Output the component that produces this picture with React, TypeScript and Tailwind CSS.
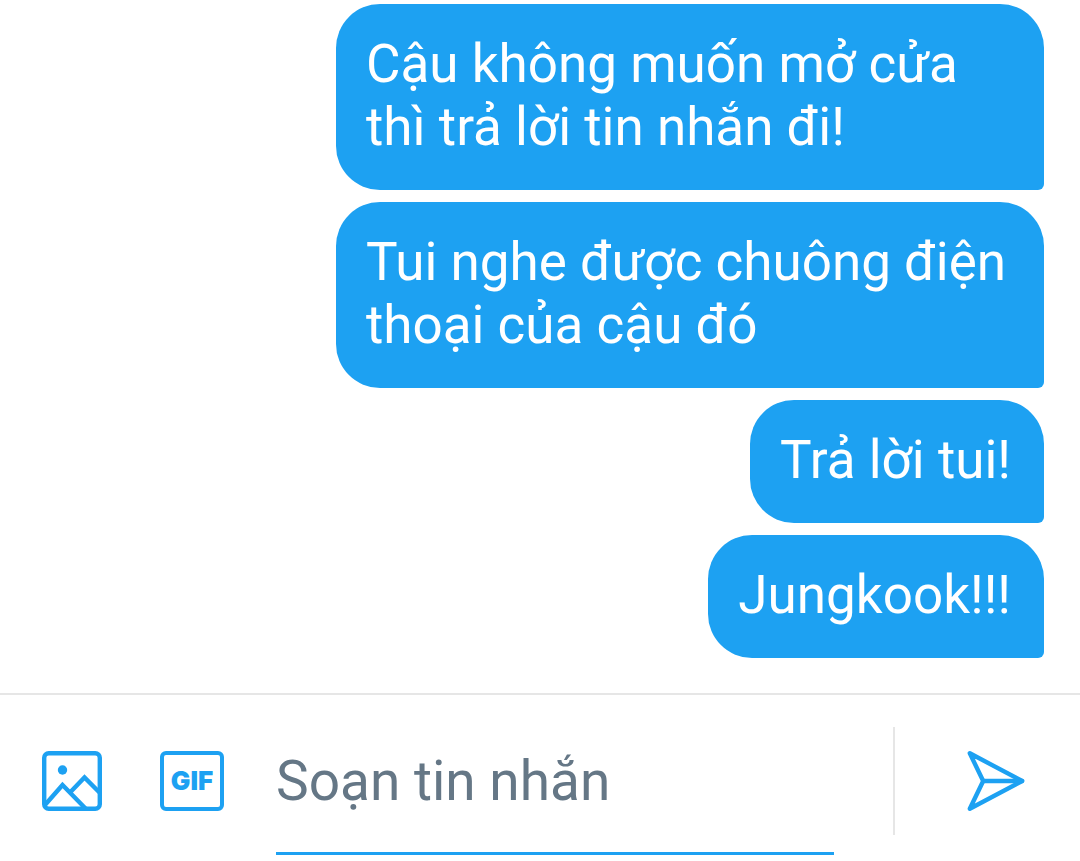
import type { ReactNode } from "react";

const messages = [
  "Cậu không muốn mở cửa thì trả lời tin nhắn đi!",
  "Tui nghe được chuông điện thoại của cậu đó",
  "Trả lời tui!",
  "Jungkook!!!",
];

function Bubble({ children }: { children: ReactNode }) {
  return (
    <li className="max-w-[708px] rounded-[44px] rounded-br-md bg-[#1da1f2] pt-[29px] pr-[33px] pb-[31px] pl-[30px] text-[53px] leading-[63px] text-white">
      {children}
    </li>
  );
}

function PhotoIcon() {
  return (
    <svg
      width="60"
      height="60"
      viewBox="0 0 60 60"
      fill="none"
      stroke="currentColor"
      strokeWidth="4.4"
      aria-hidden="true"
    >
      <rect x="2.2" y="2.2" width="55.6" height="55.6" rx="4.5" />
      <circle cx="20.5" cy="19" r="4.7" fill="currentColor" stroke="none" />
      <path d="M2.5 54.5 20.5 34 43.5 57.5" />
      <path d="M28 41.5 42.5 26.5 57.5 41.5" />
    </svg>
  );
}

function SendIcon() {
  return (
    <svg
      width="60"
      height="60"
      viewBox="0 0 60 60"
      fill="none"
      stroke="currentColor"
      strokeWidth="4.4"
      strokeLinecap="round"
      strokeLinejoin="round"
      aria-hidden="true"
    >
      <path d="M3.8 2.3 56.2 30 3.8 57.7 17.2 30Z" />
      <path d="M17.2 30H56" />
    </svg>
  );
}

export default function App() {
  return (
    <div className="flex min-h-screen flex-col bg-white font-['Roboto',sans-serif]">
      <main className="flex flex-1 flex-col justify-end px-9 pt-1 pb-[35px]">
        <ul className="flex flex-col items-end gap-3">
          {messages.map((message) => (
            <Bubble key={message}>{message}</Bubble>
          ))}
        </ul>
      </main>

      <form
        className="flex items-start border-t-2 border-[#e6e6e6] pt-8 pb-1.5 pl-[42px] text-[#1da1f2]"
        onSubmit={(e) => e.preventDefault()}
      >
        {/* Attachments */}
        <div className="mr-[52px] flex h-[108px] shrink-0 items-center gap-[58px]">
          <button type="button" aria-label="Ảnh">
            <PhotoIcon />
          </button>
          <button
            type="button"
            className="flex h-[60px] w-16 items-center justify-center rounded-md border-4 border-[#1da1f2] font-['Inter',sans-serif] text-[26px] leading-none font-black"
          >
            GIF
          </button>
        </div>

        <input
          type="text"
          aria-label="Soạn tin nhắn"
          placeholder="Soạn tin nhắn"
          className="h-32 min-w-0 flex-1 border-b-[3px] border-[#1da1f2] pb-[18px] text-[55px] text-[#14171a] outline-none placeholder:text-[#657786]"
        />

        {/* Send */}
        <div className="ml-[59px] flex h-[108px] shrink-0 items-center border-l-2 border-[#e6e6e6] pr-[54px] pl-[71px]">
          <button type="submit" aria-label="Gửi">
            <SendIcon />
          </button>
        </div>
      </form>
    </div>
  );
}
